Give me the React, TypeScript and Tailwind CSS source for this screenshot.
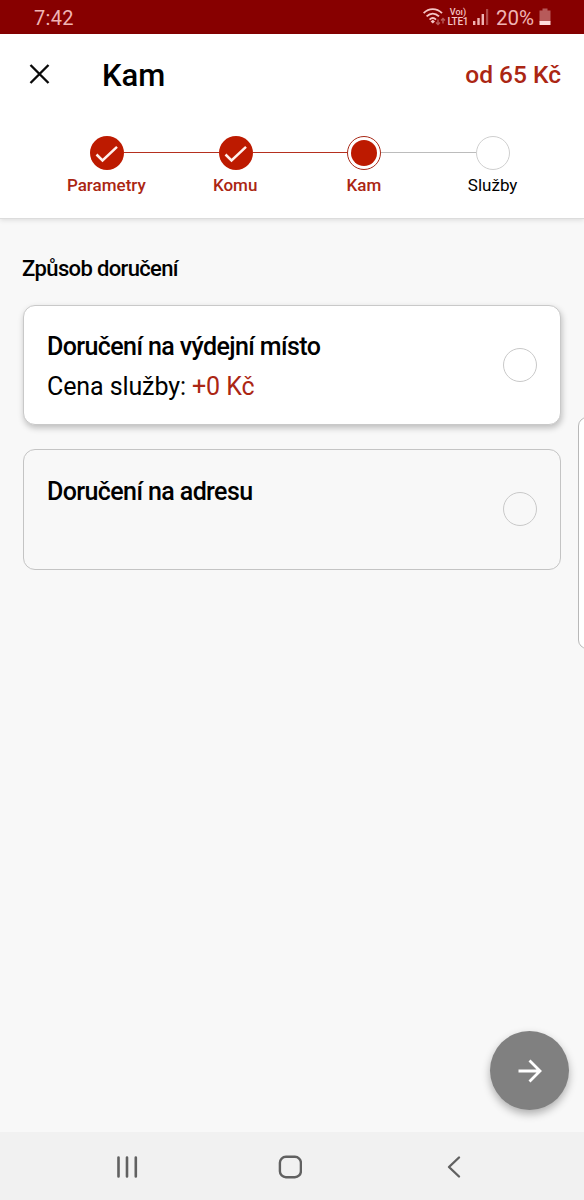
import React from "react";

const steps = [
  { label: "Parametry", state: "done" },
  { label: "Komu", state: "done" },
  { label: "Kam", state: "current" },
  { label: "Služby", state: "next" },
];

const StatusBar = () => {
  return (
    <div className="flex h-[34px] items-center bg-[#870000] pl-[34px] pr-[33px] text-[#f0b4b4]">
      <span className="text-[20px] leading-[34px] tracking-[0.3px] mt-[2px]">7:42</span>
      <div className="ml-auto flex items-center">
        <svg width="24" height="20" viewBox="0 0 24 20" fill="none">
          <g stroke="#f5c6c6" strokeWidth="1.9">
            <path d="M0.6 6.2C5.8 0.8 13.6 0.8 19 6.2" />
            <path d="M3.6 9.4C7.4 5.8 12.2 5.8 16 9.4" />
            <path d="M6.6 12.6C8.6 10.7 11 10.7 13 12.6" />
          </g>
          <path d="M7.6 14.4L9.8 12.8L12 14.4L9.8 16.6Z" fill="#f5c6c6" />
          <g stroke="#b75a5a" strokeWidth="1.4">
            <path d="M15 12.5V17.5M13 15.5L15 17.5L17 15.5" />
            <path d="M20 16.5V11.5M18 13.5L20 11.5L22 13.5" />
          </g>
        </svg>
        <div className="flex w-[22px] flex-col items-center gap-[2px] text-[10px] font-medium text-[#f5c6c6]">
          <span className="h-[8px] whitespace-nowrap text-[9px] leading-[8px]">Voı)</span>
          <span className="h-[8px] whitespace-nowrap leading-[8px] tracking-[-0.2px]">LTE1</span>
        </div>
        <svg width="16" height="18" viewBox="0 0 16 18" className="ml-[4px]">
          <path d="M0 13h2.4v4H0zM4.3 10h2.4v7H4.3zM8.6 6h2.4v11H8.6z" fill="#f0b4b4" />
          <path d="M13 1h2.2v16H13z" fill="#b04848" />
        </svg>
        <span className="ml-[7px] mt-[2px] text-[20.5px] leading-[34px]">20%</span>
        <svg width="12" height="18" viewBox="0 0 12 18" className="ml-[5px]">
          <path d="M3.5 0.5h5v2H11.5v11H0.5v-11h3z" fill="#b75a5a" />
          <path d="M0.5 13h11v4H0.5z" fill="#ffdede" />
        </svg>
      </div>
    </div>
  );
};

const StepCircle = ({ state }: { state: string }) => {
  if (state === "done") {
    return (
      <div className="size-[34px] shrink-0 rounded-full bg-[#bd1a00]">
        <svg width="34" height="34" viewBox="0 0 34 34" fill="none">
          <path d="M6.5 18.5L12.5 24.5L27 10.8" stroke="#fff0ec" strokeWidth="2.5" />
        </svg>
      </div>
    );
  }
  if (state === "current") {
    return (
      <div className="flex size-[34px] shrink-0 items-center justify-center rounded-full border-[1.5px] border-[#a82a18] bg-white">
        <div className="size-[26px] rounded-full bg-[#bd1a00]" />
      </div>
    );
  }
  return <div className="size-[34px] shrink-0 rounded-full border border-[#cfcfcf] bg-white" />;
};

const Header = () => {
  return (
    <header className="h-[185px] border-b border-[#dcdcdc] bg-white shadow-[0_1px_5px_rgba(0,0,0,0.12)]">
      <div className="flex h-[80px] items-center pl-[29px] pr-[23px]">
        <svg width="21" height="21" viewBox="0 0 21 21" fill="none">
          <path d="M1.5 1L19.5 19M19.5 1L1.5 19" stroke="#0a0a0a" strokeWidth="2.4" />
        </svg>
        <h1 className="ml-[52px] mt-[3px] text-[31px] font-medium leading-[40px] text-black">Kam</h1>
        <span className="ml-auto mt-[2px] text-[24.5px] font-medium text-[#ab2613]">od 65 Kč</span>
      </div>
      <div className="mt-[22px] flex items-center pl-[90px] pr-[74px]">
        {steps.map((step, i) => (
          <React.Fragment key={step.label}>
            {i > 0 && (
              <div
                className={
                  step.state === "next" ? "mb-px h-[1.5px] flex-1 bg-[#bcbcbc]" : "mb-px h-[1.5px] flex-1 bg-[#b5301f]"
                }
              />
            )}
            <StepCircle state={step.state} />
          </React.Fragment>
        ))}
      </div>
      <div className="ml-[42px] mt-[3px] grid w-[515px] grid-cols-4 text-center text-[17px] leading-[24px]">
        {steps.map((step) => (
          <span
            key={step.label}
            className={step.state === "next" ? "text-black" : "font-medium text-[#ab2613]"}
          >
            {step.label}
          </span>
        ))}
      </div>
    </header>
  );
};

const Radio = () => <div className="size-[34px] shrink-0 rounded-full border border-[#c9c9c9]" />;

const NavBar = () => {
  return (
    <nav className="flex h-[68px] items-center bg-[#f1f1f1] pl-[115px] pr-[122px] pt-[2px]">
      <svg width="24" height="24" viewBox="0 0 24 24" fill="none" stroke="#616161" strokeWidth="2.6" strokeLinecap="round">
        <path d="M3.5 2.5V21.5M12 2.5V21.5M20.8 2.5V21.5" />
      </svg>
      <svg width="24" height="24" viewBox="0 0 24 24" fill="none" className="ml-[139px]">
        <rect x="1.9" y="1.8" width="21" height="20.4" rx="6" stroke="#616161" strokeWidth="2.4" />
      </svg>
      <svg width="16" height="24" viewBox="0 0 16 24" fill="none" className="ml-auto">
        <path d="M13 2.5L3 12L13 21.5" stroke="#616161" strokeWidth="2.4" strokeLinecap="round" strokeLinejoin="round" />
      </svg>
    </nav>
  );
};

const App = () => {
  return (
    <div className="relative flex h-[1200px] w-[584px] flex-col overflow-hidden bg-[#f8f8f8] font-[Roboto,sans-serif]">
      <StatusBar />
      <Header />
      <main className="flex flex-1 flex-col px-[23px] pt-[35px]">
        <h2 className="-ml-px text-[22px] font-medium leading-[30px] tracking-[-0.65px] text-black">
          Způsob doručení
        </h2>
        <div className="mt-[21px] flex h-[120px] items-center justify-between rounded-[12px] border border-[#c9c9c9] bg-white px-[23px] shadow-[1px_3px_6px_rgba(0,0,0,0.24)]">
          <div className="flex flex-col pt-[4px] text-[25px] leading-[40px] text-black">
            <span className="font-medium tracking-[-0.6px]">Doručení na výdejní místo</span>
            <span className="tracking-[-0.1px]">
              Cena služby: <span className="text-[#ab2613]">+0 Kč</span>
            </span>
          </div>
          <Radio />
        </div>
        <div className="mt-[24px] flex h-[121px] items-center justify-between rounded-[12px] border border-[#c4c4c4] px-[23px] pb-px">
          <span className="self-start pt-[22px] text-[25px] font-medium leading-[40px] tracking-[-0.6px] text-black">
            Doručení na adresu
          </span>
          <Radio />
        </div>
      </main>
      {/* edge panel handle */}
      <div className="absolute left-[578px] top-[417px] h-[232px] w-[20px] rounded-[9px] border border-[#b8b8b8] bg-white" />
      <button className="absolute left-[490px] top-[1031px] flex size-[79px] items-center justify-center rounded-full bg-[#808080] shadow-[0_4px_9px_rgba(0,0,0,0.3)]">
        <svg width="24" height="24" viewBox="0 0 24 24" fill="none">
          <path d="M0.5 12H22M11.5 1.5L22 12L11.5 22.5" stroke="#ffffff" strokeWidth="2.8" />
        </svg>
      </button>
      <NavBar />
    </div>
  );
};

export default App;
